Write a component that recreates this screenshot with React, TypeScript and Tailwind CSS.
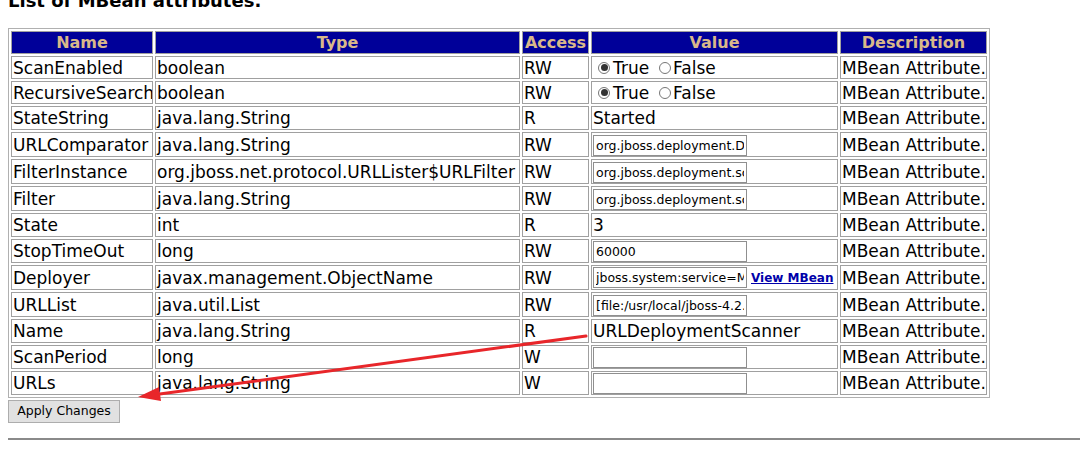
import React from "react";

type Row = {
  name: string;
  type: string;
  access: string;
  value: React.ReactNode;
  h: string;
};

const Radio = ({ checked }: { checked?: boolean }) => (
  <span className="inline-flex h-[12px] w-[12px] items-center justify-center rounded-full border border-[#767676] bg-white">
    {checked && <span className="h-[7px] w-[7px] rounded-full bg-[#333]" />}
  </span>
);

const Field = ({ value }: { value: string }) => (
  <input
    readOnly
    value={value}
    className="h-[21px] w-[154px] border border-[#8f8f8f] bg-white px-[2px] text-[12.5px] text-black outline-none [font-family:'DejaVu_Sans',Verdana,sans-serif]"
  />
);

const Bool = () => (
  <span className="flex items-center pl-[5px]">
    <Radio checked />
    <span className="ml-[3px]">True</span>
    <span className="ml-[10px]">
      <Radio />
    </span>
    <span className="ml-[2px]">False</span>
  </span>
);

const rows: Row[] = [
  { name: "ScanEnabled", type: "boolean", access: "RW", value: <Bool />, h: "h-[23px]" },
  { name: "RecursiveSearch", type: "boolean", access: "RW", value: <Bool />, h: "h-[23px]" },
  { name: "StateString", type: "java.lang.String", access: "R", value: "Started", h: "h-[24px]" },
  { name: "URLComparator", type: "java.lang.String", access: "RW", value: <Field value="org.jboss.deployment.DeploymentSorter" />, h: "h-[25px]" },
  { name: "FilterInstance", type: "org.jboss.net.protocol.URLLister$URLFilter", access: "RW", value: <Field value="org.jboss.deployment.scanner.DeploymentFilter@1b3e5d7" />, h: "h-[25px]" },
  { name: "Filter", type: "java.lang.String", access: "RW", value: <Field value="org.jboss.deployment.scanner.DeploymentFilter" />, h: "h-[25px]" },
  { name: "State", type: "int", access: "R", value: "3", h: "h-[24px]" },
  { name: "StopTimeOut", type: "long", access: "RW", value: <Field value="60000" />, h: "h-[24px]" },
  {
    name: "Deployer",
    type: "javax.management.ObjectName",
    access: "RW",
    value: (
      <span className="flex items-center whitespace-nowrap">
        <Field value="jboss.system:service=MainDeployer" />
        <a href="#" className="ml-[4px] text-[12px] font-bold text-[#0000aa] underline">
          View MBean
        </a>
      </span>
    ),
    h: "h-[25px]",
  },
  { name: "URLList", type: "java.util.List", access: "RW", value: <Field value="[file:/usr/local/jboss-4.2.3.GA/server/default/deploy/]" />, h: "h-[25px]" },
  { name: "Name", type: "java.lang.String", access: "R", value: "URLDeploymentScanner", h: "h-[24px]" },
  { name: "ScanPeriod", type: "long", access: "W", value: <Field value="" />, h: "h-[24px]" },
  { name: "URLs", type: "java.lang.String", access: "W", value: <Field value="" />, h: "h-[24px]" },
];

const td = "border border-[#a0a0a0] px-[1px] py-0 align-middle whitespace-nowrap overflow-hidden";
const th = "border border-[#a0a0a0] bg-[#000099] px-0 py-0 text-center text-[16px] font-bold text-[#d9b88a]";

export default function App() {
  return (
    <div className="relative h-[450px] w-[1080px] overflow-hidden bg-white text-black [font-family:'DejaVu_Sans',Verdana,sans-serif]">
      <div className="px-[8px]">
        <h3 className="mt-[-8px] text-[18px] font-bold leading-none">List of MBean attributes.</h3>
        <table className="mt-[18px] w-[982px] table-fixed border-separate border-spacing-[2px] border border-[#b0b0b0] text-[17px] leading-[20px]">
          <colgroup>
            <col className="w-[142px]" />
            <col className="w-[365px]" />
            <col className="w-[67px]" />
            <col className="w-[247px]" />
            <col className="w-[147px]" />
          </colgroup>
          <thead>
            <tr className="h-[23px]">
              <th className={th}>Name</th>
              <th className={th}>Type</th>
              <th className={th}>Access</th>
              <th className={th}>Value</th>
              <th className={th}>Description</th>
            </tr>
          </thead>
          <tbody>
            {rows.map((r) => (
              <tr key={r.name} className={r.h}>
                <td className={td}>{r.name}</td>
                <td className={td}>{r.type}</td>
                <td className={td}>{r.access}</td>
                <td className={td}>{r.value}</td>
                <td className={td}>MBean Attribute.</td>
              </tr>
            ))}
          </tbody>
        </table>
        <button className="mt-[1px] h-[23px] w-[112px] border border-[#adadad] bg-[#e1e1e1] text-[12.5px] text-black">
          Apply Changes
        </button>
        <div className="mt-[15px] w-[1080px] border-t-2 border-[#8a8a8a]" />
      </div>
      <svg className="pointer-events-none absolute left-0 top-0" width="1080" height="450" viewBox="0 0 1080 450">
        <line x1="586" y1="336" x2="156" y2="394.5" stroke="#e8262a" strokeWidth="3" strokeLinecap="round" />
        <polygon points="138,397 161,401 159,387" fill="#e8262a" />
      </svg>
    </div>
  );
}
